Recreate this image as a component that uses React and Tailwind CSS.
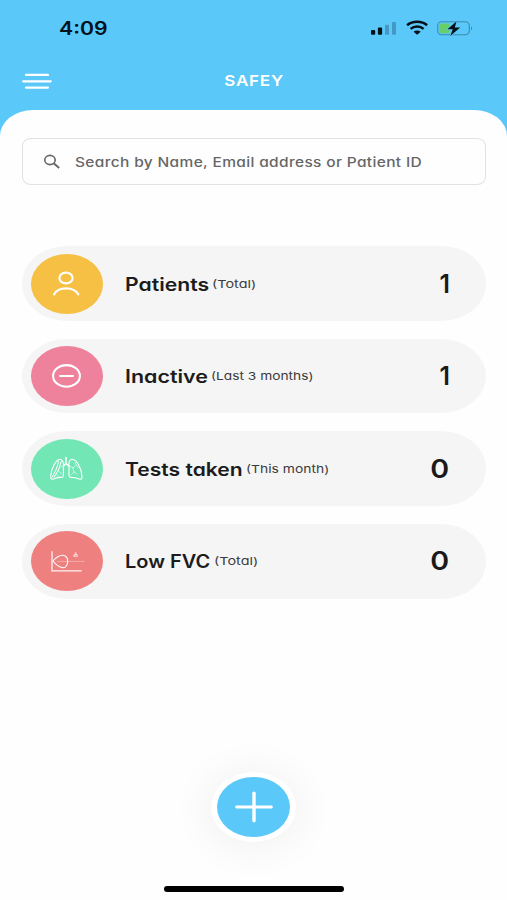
import React from 'react';

function PatientIcon() {
  return (
    <svg className="h-[60px] w-[72px]" viewBox="0 0 72 60" fill="none" stroke="white" strokeWidth="2.1" strokeLinecap="round">
      <ellipse cx="35" cy="24" rx="6.6" ry="5.4" />
      <path d="M23 40.4C25.2 36.4 29.6 34.4 35 34.4S45 36.4 47.4 40.4" />
    </svg>
  );
}

function InactiveIcon() {
  return (
    <svg className="h-[60px] w-[72px]" viewBox="0 0 72 60" fill="none" stroke="white" strokeWidth="2.1" strokeLinecap="round">
      <ellipse cx="35.5" cy="29.9" rx="13.4" ry="10.8" />
      <path d="M29 30H42" />
    </svg>
  );
}

function LungsIcon() {
  return (
    <svg className="h-[60px] w-[72px]" viewBox="0 0 72 60" fill="none" stroke="white" strokeLinecap="round" strokeLinejoin="round">
      <path strokeWidth="1.5" d="M35 18.5V24.5L32.5 27M35 24.5L37.8 27" />
      <path strokeWidth="1.1" d="M32.4 27.5C32.8 23.5 31.6 20.3 29 20.2C25 20.4 20.3 29.5 19.7 37C19.5 41 21.4 40.8 24.5 39.2C27.8 37.6 31.5 39.2 32.2 37.5C32.9 35.5 32.2 31 32.4 27.5Z" />
      <path strokeWidth="1.1" d="M38 27.5C37.4 23.5 38.5 20.3 41.3 20.2C45.5 20.4 50.5 29 51 37C51.2 41 49.2 40.8 46 39.2C42.8 37.6 39 39.4 38.3 37.5C37.5 35.5 38.2 31 38 27.5Z" />
      <path strokeWidth="1" d="M30.4 22L27.4 31L23 38.4M27.6 22.5L25 31L21.2 38" />
      <path strokeWidth="0.6" d="M28 29L31.5 27M27.3 32L31 35M25.5 35L28 37.5M38.5 27L42 29L44 27M42 29L43 33L46 35M43 33L40.5 35.5M44 23.5L45.5 27L48 29" />
    </svg>
  );
}

function FlowChartIcon() {
  return (
    <svg className="h-[60px] w-[72px]" viewBox="0 0 72 60" fill="none" stroke="white" strokeLinecap="square">
      <path strokeWidth="1.3" d="M21 21V39.8H50" opacity="0.9" />
      <path strokeWidth="1.1" d="M22 30C24.5 26.5 29.2 24 31.8 24.2C35 24.7 36.7 27.3 36.7 30.2C36.7 34 34.6 37.1 32 36.8C28.8 36.3 24.5 33.4 22 30Z" />
      <path strokeWidth="0.7" opacity="0.5" strokeDasharray="1.5 1" d="M26.5 30.4H53" />
      <path strokeWidth="0.9" opacity="0.85" d="M44.8 21.5V23.3M43.6 23.6H46L46.4 25.3H43.2Z" />
    </svg>
  );
}

const cards = [
  { title: 'Patients', note: '(Total)', value: '1', color: 'bg-[#f5c044]', Icon: PatientIcon, titleBox: 'w-[87px]', titleScale: 'scale-x-[1.175]', noteScale: 'scale-x-[1.31]', valueScale: 'scale-x-[0.95]' },
  { title: 'Inactive', note: '(Last 3 months)', value: '1', color: 'bg-[#ee829d]', Icon: InactiveIcon, titleBox: 'w-[86px]', titleScale: 'scale-x-[1.19]', noteScale: 'scale-x-[1.25]', valueScale: 'scale-x-[0.95]' },
  { title: 'Tests taken', note: '(This month)', value: '0', color: 'bg-[#72e7b5]', Icon: LungsIcon, titleBox: 'w-[121px]', titleScale: 'scale-x-[1.17]', noteScale: 'scale-x-[1.26]', valueScale: 'scale-x-[1.1]' },
  { title: 'Low FVC', note: '(Total)', value: '0', color: 'bg-[#ef8080]', Icon: FlowChartIcon, titleBox: 'w-[89px]', titleScale: 'scale-x-[1.11]', noteScale: 'scale-x-[1.31]', valueScale: 'scale-x-[1.1]' },
];

function StatCard({ title, note, value, color, Icon, titleBox, titleScale, noteScale, valueScale }) {
  return (
    <div className="flex h-[74.5px] items-center rounded-[45px/37px] bg-[#f5f5f5] pl-[9px] pr-[36px]">
      <div className={`flex h-[60px] w-[72.5px] shrink-0 items-center justify-center overflow-hidden rounded-[50%] ${color}`}>
        <Icon />
      </div>
      <div className="ml-[22px] flex flex-1 items-center whitespace-nowrap">
        <div className={`shrink-0 pt-[2px] ${titleBox}`}>
          <span className={`inline-block origin-left text-[18px] leading-6 font-semibold text-[#1c1c1c] ${titleScale}`}>{title}</span>
        </div>
        <span className={`inline-block origin-left text-[11px] leading-6 text-[#3c3c3c] ${noteScale}`}>{note}</span>
      </div>
      <span className={`inline-block origin-right text-[26px] leading-8 font-semibold text-[#1a1a1a] ${valueScale}`}>{value}</span>
    </div>
  );
}

function StatusIcons() {
  return (
    <svg className="h-[20px] w-[104px]" viewBox="0 0 104 20" fill="none">
      <rect x="2" y="12" width="4.2" height="4.8" rx="1" fill="#06121a" />
      <rect x="8.9" y="9.4" width="4.2" height="7.4" rx="1" fill="#06121a" />
      <rect x="16" y="6.8" width="4" height="10" rx="1" fill="#4498c4" />
      <rect x="23" y="4" width="4" height="12.8" rx="1" fill="#4498c4" />
      <path d="M38.1 7.2C43.6 2.6 52.6 2.6 58.1 7.2" stroke="#06121a" strokeWidth="2.5" />
      <path d="M41.6 10.8C45.2 7.8 51 7.8 54.6 10.8" stroke="#06121a" strokeWidth="2.4" />
      <path d="M44.6 13.8C46.6 12.1 49.6 12.1 51.7 13.8L48.1 16.8Z" fill="#06121a" />
      <rect x="68.7" y="3.8" width="31.6" height="13" rx="4" stroke="#3c8bb3" strokeWidth="1.1" />
      <path d="M72.6 5.4H80V15.2H72.6C71 15.2 70.3 14.2 70.3 13V7.6C70.3 6.2 71 5.4 72.6 5.4Z" fill="#66cf69" />
      <path d="M102 8.4C103.6 9.1 103.6 11.5 102 12.2Z" fill="#3c8bb3" />
      <path d="M87.6 3.2L78.4 11.2H83.8L81.2 18L91.2 9.5H85.8Z" fill="#06121a" stroke="#5cc8f8" strokeWidth="1.4" paintOrder="stroke" />
    </svg>
  );
}

export default function App() {
  return (
    <div className="flex h-[900px] w-[507px] flex-col overflow-hidden bg-[#5ac8f8] font-['Inter','Liberation_Sans',sans-serif]">
      <header className="h-[110.4px] shrink-0">
        <div className="flex h-[56px] items-center justify-between pl-[59px] pr-[34px]">
          <span className="origin-left scale-x-[1.18] pt-[2px] text-[18px] leading-6 font-semibold text-[#06121a]">4:09</span>
          <StatusIcons />
        </div>
        <div className="grid h-[49px] grid-cols-[1fr_auto_1fr] items-center pl-[22px] pr-[21px]">
          <svg className="h-[18px] w-[30px]" viewBox="0 0 30 18" stroke="white" strokeWidth="2.2" strokeLinecap="round">
            <path d="M4 2.9H26M1.2 9.3H28.8M4 15.6H26" />
          </svg>
          <span className="scale-x-[1.14] text-[15px] leading-5 font-semibold tracking-[0.6px] text-white">SAFEY</span>
        </div>
      </header>

      <main className="flex flex-1 flex-col rounded-t-[33px_26px] bg-[#fefefe] px-[21.5px] pt-[27.9px] [font-feature-settings:'cv11']">
        <div className="flex h-[47px] shrink-0 items-center rounded-[9px/8px] border border-[#e2e2e4] bg-[#fefefe] pl-[20px]">
          <svg className="h-[15px] w-[18px] shrink-0" viewBox="0 0 18 15" fill="none" stroke="#666" strokeWidth="1.6">
            <ellipse cx="7" cy="6" rx="5.2" ry="4.6" />
            <path d="M10.6 9.2L16.2 14" strokeWidth="1.9" />
          </svg>
          <span className="ml-[14px] inline-block origin-left scale-x-[1.19] whitespace-nowrap text-[13px] leading-5 font-medium tracking-[0.3px] text-[#666]">
            Search by Name, Email address or Patient ID
          </span>
        </div>

        <div className="mt-[61px] flex flex-col gap-[18.1px]">
          {cards.map((card) => (
            <StatCard key={card.title} {...card} />
          ))}
        </div>

        <div className="mt-auto flex flex-col items-center pb-[8.5px]">
          <button className="flex h-[70px] w-[85px] items-center justify-center rounded-[50%] bg-white shadow-[0_3px_36px_9px_rgba(0,0,0,0.045)]">
            <span className="flex h-[60px] w-[73px] items-center justify-center rounded-[50%] bg-[#5ac8f8]">
              <svg className="h-[32px] w-[38px]" viewBox="0 0 38 32" stroke="white" strokeLinecap="round">
                <path d="M19 2.2V29.8" strokeWidth="3.4" />
                <path d="M1.6 16H36.4" strokeWidth="2.8" />
              </svg>
            </span>
          </button>
          <div className="ml-px mt-[44px] h-[5.5px] w-[180.5px] rounded-full bg-black" />
        </div>
      </main>
    </div>
  );
}
